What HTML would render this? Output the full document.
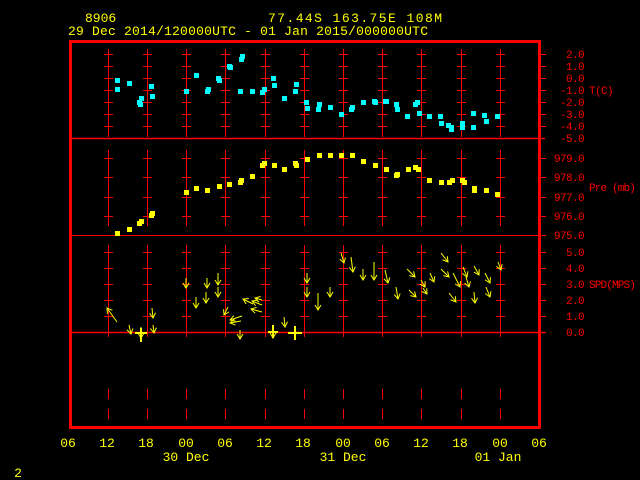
<!DOCTYPE html>
<html><head><meta charset="utf-8"><style>
html,body{margin:0;padding:0;background:#000;width:640px;height:480px;overflow:hidden}
svg{display:block}
text{font-family:"Liberation Mono",monospace;font-size:13px}
.r text{font-size:11px;letter-spacing:-0.6px}
.r text.l{letter-spacing:-0.85px}
</style></head><body>
<svg width="640" height="480" viewBox="0 0 640 480" xmlns="http://www.w3.org/2000/svg">
<defs>
<marker id="ah" markerWidth="8" markerHeight="8" refX="6" refY="4" orient="auto" markerUnits="userSpaceOnUse"><path d="M1,1 L6,4 L1,7" fill="none" stroke="#ffff00" stroke-width="1"/></marker>
</defs>
<g fill="#ffff00">
<text x="85" y="22">8906</text>
<text x="268" y="22" textLength="174">77.44S  163.75E   108M</text>
<text x="68" y="35" textLength="360">29 Dec 2014/120000UTC - 01 Jan 2015/000000UTC</text>
</g>
<rect x="70.5" y="41.5" width="469" height="386" fill="none" stroke="#ff0000" stroke-width="3"/>
<line x1="72" y1="138.5" x2="545" y2="138.5" stroke="#ff0000" stroke-width="1.5"/>
<line x1="72" y1="235.5" x2="545" y2="235.5" stroke="#ff0000" stroke-width="1"/>
<line x1="72" y1="332.5" x2="545" y2="332.5" stroke="#ff0000" stroke-width="1.5"/>
<g stroke="#ff0000" stroke-width="1">
<path d="
M108.5,49V137 M147.5,49V137 M186.5,49V137 M225.5,49V137 M265.5,49V137 M304.5,49V137 M343.5,49V137 M382.5,49V137 M421.5,49V137 M461.5,49V137 M500.5,49V137
M108.5,150V226 M147.5,150V226 M186.5,150V226 M225.5,150V226 M265.5,150V226 M304.5,150V226 M343.5,150V226 M382.5,150V226 M421.5,150V226 M461.5,150V226 M500.5,150V226
M108.5,245V337 M147.5,245V337 M186.5,245V337 M225.5,245V337 M265.5,245V337 M304.5,245V337 M343.5,245V337 M382.5,245V337 M421.5,245V337 M461.5,245V337 M500.5,245V337
M108.5,389V399 M147.5,389V399 M186.5,389V399 M225.5,389V399 M265.5,389V399 M304.5,389V399 M343.5,389V399 M382.5,389V399 M421.5,389V399 M461.5,389V399 M500.5,389V399
M108.5,409V419 M147.5,409V419 M186.5,409V419 M225.5,409V419 M265.5,409V419 M304.5,409V419 M343.5,409V419 M382.5,409V419 M421.5,409V419 M461.5,409V419 M500.5,409V419
"/>
</g>
<g fill="#ff0000" class="r">
<g text-anchor="end">
<text x="584" y="58">2.0</text><text x="584" y="70">1.0</text><text x="584" y="82">0.0</text><text x="584" y="94">-1.0</text><text x="584" y="106">-2.0</text><text x="584" y="118">-3.0</text><text x="584" y="130">-4.0</text><text x="584" y="142">-5.0</text>
<text x="584" y="162">979.0</text><text x="584" y="181">978.0</text><text x="584" y="201">977.0</text><text x="584" y="220">976.0</text><text x="584" y="239">975.0</text>
<text x="584" y="256">5.0</text><text x="584" y="272">4.0</text><text x="584" y="288">3.0</text><text x="584" y="304">2.0</text><text x="584" y="320">1.0</text><text x="584" y="336">0.0</text>
</g>
<text x="589" y="94">T(C)</text>
<text x="589" y="191" class="l">Pre (mb)</text>
<text x="589" y="288" class="l">SPD(MPS)</text>
</g>
<g fill="#ffff00" text-anchor="middle">
<text x="68" y="447">06</text><text x="107" y="447">12</text><text x="146" y="447">18</text><text x="186" y="447">00</text><text x="225" y="447">06</text><text x="264" y="447">12</text><text x="303" y="447">18</text><text x="343" y="447">00</text><text x="382" y="447">06</text><text x="421" y="447">12</text><text x="460" y="447">18</text><text x="500" y="447">00</text><text x="539" y="447">06</text>
<text x="186" y="461">30 Dec</text><text x="343" y="461">31 Dec</text><text x="498" y="461">01 Jan</text>
<text x="18" y="477">2</text>
</g>
<g stroke="#ff0000" stroke-width="1" fill="none">
<path id="hp" d="M104,54.5h9M104,66.5h9M104,78.5h9M104,90.5h9M104,102.5h9M104,114.5h9M104,126.5h9M104,158.5h9M104,177.5h9M104,197.5h9M104,216.5h9M104,252.5h9M104,268.5h9M104,284.5h9M104,300.5h9M104,316.5h9"/>
<use href="#hp" x="39"/><use href="#hp" x="78"/><use href="#hp" x="117"/><use href="#hp" x="157"/><use href="#hp" x="196"/><use href="#hp" x="235"/><use href="#hp" x="274"/><use href="#hp" x="313"/><use href="#hp" x="353"/><use href="#hp" x="392"/>
<path d="M539,54.5h7M539,66.5h7M539,78.5h7M539,90.5h7M539,102.5h7M539,114.5h7M539,126.5h7M539,158.5h7M539,177.5h7M539,197.5h7M539,216.5h7M539,235.5h7M539,252.5h7M539,268.5h7M539,284.5h7M539,300.5h7M539,316.5h7M539,332.5h7"/>
</g>
<g fill="#00ffff">
<rect x="115" y="78" width="5" height="5"/><rect x="115" y="87" width="5" height="5"/><rect x="127" y="81" width="5" height="5"/><rect x="137" y="100" width="5" height="5"/><rect x="139" y="96" width="5" height="5"/><rect x="138" y="102" width="5" height="5"/><rect x="149" y="84" width="5" height="5"/><rect x="150" y="94" width="5" height="5"/><rect x="184" y="89" width="5" height="5"/><rect x="194" y="73" width="5" height="5"/><rect x="205" y="89" width="5" height="5"/><rect x="206" y="87" width="5" height="5"/><rect x="216" y="76" width="5" height="5"/><rect x="217" y="78" width="5" height="5"/><rect x="227" y="64" width="5" height="5"/><rect x="228" y="65" width="5" height="5"/><rect x="239" y="57" width="5" height="5"/><rect x="240" y="54" width="5" height="5"/><rect x="238" y="89" width="5" height="5"/><rect x="250" y="89" width="5" height="5"/><rect x="260" y="90" width="5" height="5"/><rect x="262" y="87" width="5" height="5"/><rect x="271" y="76" width="5" height="5"/><rect x="272" y="83" width="5" height="5"/><rect x="282" y="96" width="5" height="5"/><rect x="293" y="89" width="5" height="5"/><rect x="294" y="82" width="5" height="5"/><rect x="304" y="100" width="5" height="5"/><rect x="305" y="106" width="5" height="5"/><rect x="316" y="107" width="5" height="5"/><rect x="317" y="102" width="5" height="5"/><rect x="328" y="105" width="5" height="5"/><rect x="339" y="112" width="5" height="5"/><rect x="349" y="107" width="5" height="5"/><rect x="350" y="105" width="5" height="5"/><rect x="361" y="100" width="5" height="5"/><rect x="372" y="99" width="5" height="5"/><rect x="373" y="100" width="5" height="5"/><rect x="383" y="99" width="5" height="5"/><rect x="384" y="99" width="5" height="5"/><rect x="394" y="102" width="5" height="5"/><rect x="395" y="107" width="5" height="5"/><rect x="405" y="114" width="5" height="5"/><rect x="413" y="102" width="5" height="5"/><rect x="415" y="100" width="5" height="5"/><rect x="417" y="111" width="5" height="5"/><rect x="427" y="114" width="5" height="5"/><rect x="438" y="114" width="5" height="5"/><rect x="439" y="121" width="5" height="5"/><rect x="446" y="123" width="5" height="5"/><rect x="449" y="125" width="5" height="5"/><rect x="449" y="127" width="5" height="5"/><rect x="460" y="121" width="5" height="5"/><rect x="460" y="125" width="5" height="5"/><rect x="471" y="111" width="5" height="5"/><rect x="471" y="125" width="5" height="5"/><rect x="482" y="113" width="5" height="5"/><rect x="484" y="119" width="5" height="5"/><rect x="495" y="114" width="5" height="5"/>
</g>
<g fill="#ffff00">
<rect x="115" y="231" width="5" height="5"/><rect x="127" y="227" width="5" height="5"/><rect x="137" y="221" width="5" height="5"/><rect x="139" y="219" width="5" height="5"/><rect x="149" y="213" width="5" height="5"/><rect x="150" y="211" width="5" height="5"/><rect x="184" y="190" width="5" height="5"/><rect x="194" y="186" width="5" height="5"/><rect x="205" y="188" width="5" height="5"/><rect x="217" y="184" width="5" height="5"/><rect x="227" y="182" width="5" height="5"/><rect x="238" y="180" width="5" height="5"/><rect x="239" y="178" width="5" height="5"/><rect x="250" y="174" width="5" height="5"/><rect x="260" y="163" width="5" height="5"/><rect x="262" y="161" width="5" height="5"/><rect x="272" y="163" width="5" height="5"/><rect x="282" y="167" width="5" height="5"/><rect x="293" y="161" width="5" height="5"/><rect x="294" y="163" width="5" height="5"/><rect x="305" y="157" width="5" height="5"/><rect x="317" y="153" width="5" height="5"/><rect x="328" y="153" width="5" height="5"/><rect x="339" y="153" width="5" height="5"/><rect x="350" y="153" width="5" height="5"/><rect x="361" y="159" width="5" height="5"/><rect x="373" y="163" width="5" height="5"/><rect x="384" y="167" width="5" height="5"/><rect x="394" y="173" width="5" height="5"/><rect x="395" y="172" width="5" height="5"/><rect x="406" y="167" width="5" height="5"/><rect x="413" y="165" width="5" height="5"/><rect x="416" y="167" width="5" height="5"/><rect x="427" y="178" width="5" height="5"/><rect x="439" y="180" width="5" height="5"/><rect x="447" y="180" width="5" height="5"/><rect x="450" y="178" width="5" height="5"/><rect x="460" y="178" width="5" height="5"/><rect x="462" y="180" width="5" height="5"/><rect x="472" y="188" width="5" height="5"/><rect x="472" y="186" width="5" height="5"/><rect x="484" y="188" width="5" height="5"/><rect x="495" y="192" width="5" height="5"/>
</g>
<g stroke="#ffff00" stroke-width="1" fill="none" marker-end="url(#ah)">
<path d="M117,322L107,308"/><path d="M129,325L131,334"/><path d="M141,327L141,338"/><path d="M152,308L153,318"/><path d="M153,325L154,333"/>
<path d="M186,278L186,288"/><path d="M196,297L196,308"/><path d="M207,278L207,288"/><path d="M206,292L206,303"/><path d="M218,273L218,285"/><path d="M218,287L218,297"/>
<path d="M228,307L224,315"/><path d="M240,330L240,339"/><path d="M241,321L230,323"/><path d="M242,316L230,320"/><path d="M253,304L243,299"/><path d="M262,305L252,301"/><path d="M262,312L251,309"/><path d="M262,300L255,298"/>
<path d="M273,325L273,338"/><path d="M284,317L285,327"/>
<path d="M307,273L307,283"/><path d="M307,287L307,297"/><path d="M318,293L318,310"/><path d="M330,287L330,297"/>
<path d="M341,253L344,263"/><path d="M351,257L353,272"/><path d="M363,269L363,280"/><path d="M374,262L374,280"/><path d="M385,270L388,283"/><path d="M396,287L398,299"/>
<path d="M407,269L415,277"/><path d="M409,290L416,297"/><path d="M421,280L425,287"/><path d="M423,288L427,294"/><path d="M430,273L434,282"/>
<path d="M441,253L448,262"/><path d="M441,269L449,277"/><path d="M453,273L460,287"/><path d="M449,293L456,302"/><path d="M463,267L467,277"/><path d="M466,277L469,287"/>
<path d="M474,266L479,275"/><path d="M474,292L475,303"/><path d="M485,273L490,283"/><path d="M486,287L490,297"/><path d="M498,262L501,270"/>
</g>
<g stroke="#ffff00" stroke-width="2">
<path d="M141,328V342M135,333h12"/><path d="M273,325V338M268,332h10"/><path d="M295,326V340M288,333h14"/>
</g>
</svg>
</body></html>
